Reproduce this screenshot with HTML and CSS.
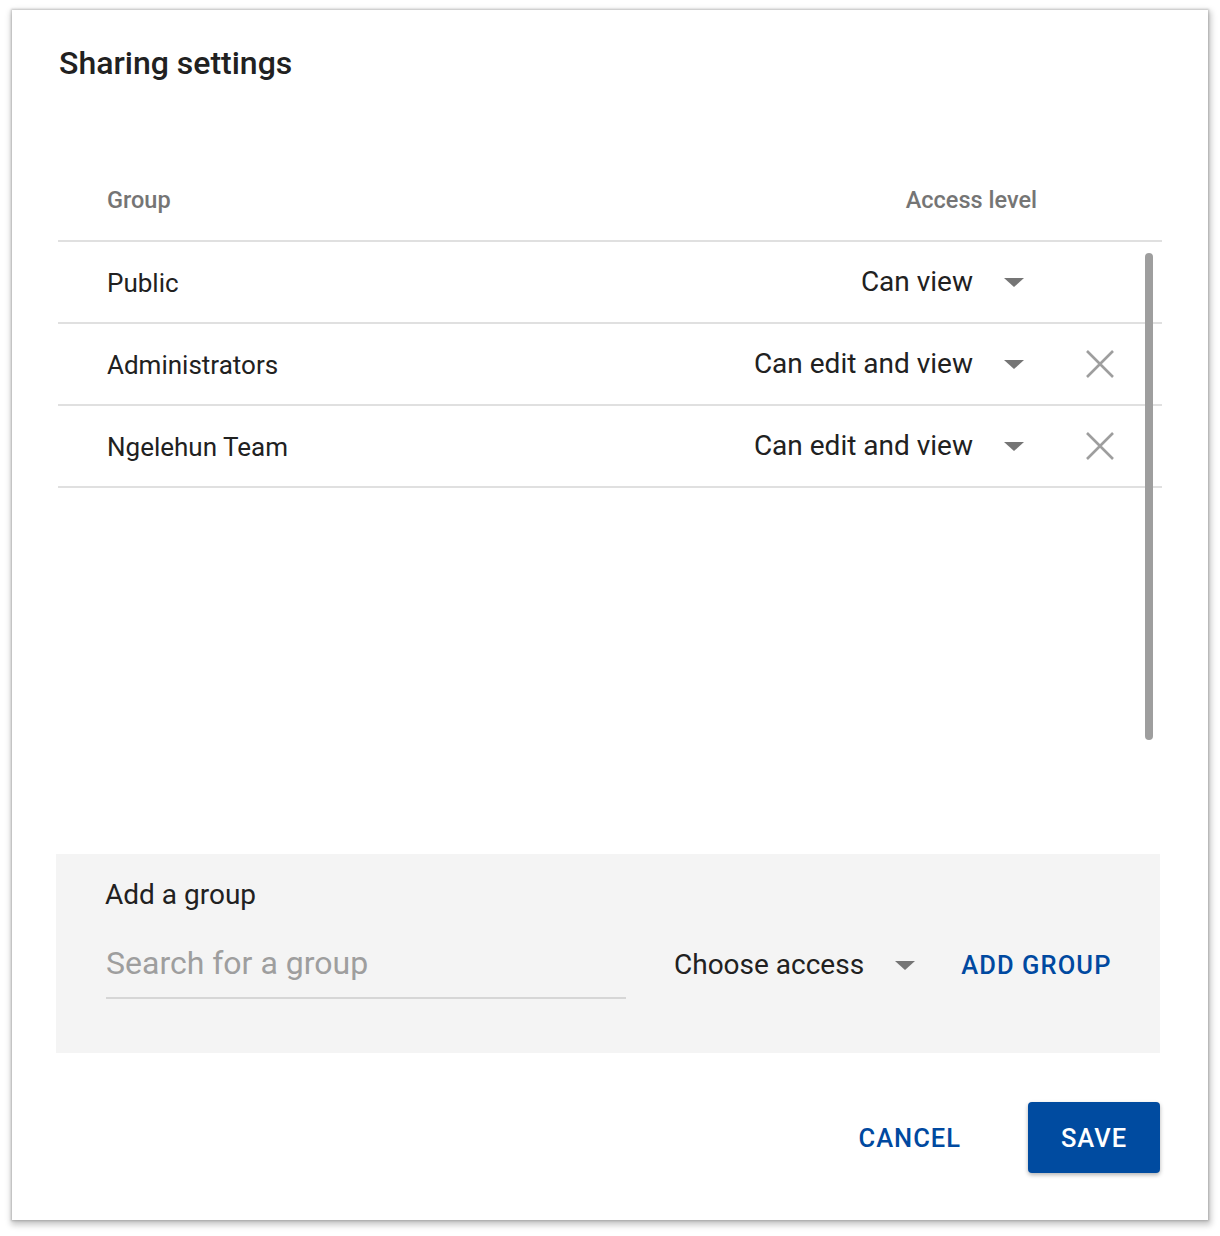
FILE: index.html
```html
<!DOCTYPE html>
<html>
<head>
<meta charset="utf-8">
<link rel="stylesheet" href="styles.css">
</head>
<body>
<div class="dialog">
  <h1 class="title">Sharing settings</h1>
  <div class="table-head">
    <span class="col-group">Group</span>
    <span class="col-access">Access level</span>
  </div>
  <div class="rows">
    <div class="row">
      <span class="name">Public</span>
      <span class="select"><span class="sel-text">Can view</span><span class="caret"></span></span>
      <span class="remove"></span>
    </div>
    <div class="row">
      <span class="name">Administrators</span>
      <span class="select"><span class="sel-text">Can edit and view</span><span class="caret"></span></span>
      <span class="remove"><svg class="x" viewBox="0 0 28 28"><path d="M1 1L27 27M27 1L1 27" stroke="#9e9e9e" stroke-width="2.6" fill="none"/></svg></span>
    </div>
    <div class="row">
      <span class="name">Ngelehun Team</span>
      <span class="select"><span class="sel-text">Can edit and view</span><span class="caret"></span></span>
      <span class="remove"><svg class="x" viewBox="0 0 28 28"><path d="M1 1L27 27M27 1L1 27" stroke="#9e9e9e" stroke-width="2.6" fill="none"/></svg></span>
    </div>
    <div class="scrollbar"></div>
  </div>
  <div class="add-panel">
    <div class="add-label">Add a group</div>
    <div class="add-controls">
      <div class="search">Search for a group</div>
      <div class="choose"><span class="sel-text">Choose access</span><span class="caret"></span></div>
      <div class="add-btn">ADD GROUP</div>
    </div>
  </div>
  <div class="footer">
    <div class="btn-flat">CANCEL</div>
    <div class="btn-raised">SAVE</div>
  </div>
</div>
</body>
</html>
```

FILE: styles.css
```css
* { box-sizing: border-box; }
html, body { margin: 0; padding: 0; background: #ffffff; }
body {
  font-family: Roboto, "Noto Sans", "Liberation Sans", sans-serif;
  color: #212121;
  width: 1220px;
  height: 1236px;
  overflow: hidden;
}
.dialog {
  margin: 10px 0 0 12px;
  width: 1196px;
  height: 1210px;
  background: #fff;
  box-shadow: 0 0 2px 1px rgba(0,0,0,0.18), 1px 3px 6px 2px rgba(0,0,0,0.22);
  padding: 0 46px;
  display: flex;
  flex-direction: column;
}
.title {
  margin: 0;
  padding: 35px 0 0 1px;
  height: 150px;
  font-size: 32px;
  line-height: 36px;
  font-weight: 500;
  color: #212121;
}
.table-head {
  height: 82px;
  display: flex;
  align-items: center;
  border-bottom: 2px solid #e0e0e0;
  padding: 0 125px 0 49px;
  font-size: 23.5px;
  font-weight: 500;
  color: #757575;
}
.col-group { flex: 1; }
.rows {
  position: relative;
  height: 612px;
}
.row {
  height: 82px;
  display: flex;
  align-items: center;
  border-bottom: 2px solid #e0e0e0;
  padding-left: 49px;
  padding-top: 2px;
  font-size: 26px;
  color: #212121;
}
.name { flex: 1; }
.select {
  display: flex;
  align-items: center;
  gap: 31px;
  font-size: 28px;
  margin-top: -3px;
}
.caret {
  width: 0; height: 0;
  border-left: 10px solid transparent;
  border-right: 10px solid transparent;
  border-top: 9px solid #757575;
  margin-top: 1px;
}
.remove {
  width: 138px;
  display: flex;
  justify-content: flex-start;
  padding-left: 62px;
  margin-top: -3px;
}
.x { width: 28px; height: 28px; display: block; }
.scrollbar {
  position: absolute;
  left: 1087px;
  top: 11px;
  width: 8px;
  height: 487px;
  border-radius: 4px;
  background: #9e9e9e;
}
.add-panel {
  margin: 0 2px 0 -2px;
  height: 199px;
  background: #f4f4f4;
  padding: 23px 0 0 49px;
}
.add-label {
  font-size: 28px;
  line-height: 36px;
  color: #212121;
}
.add-controls {
  display: flex;
  align-items: flex-start;
  margin-top: 30px;
}
.search {
  width: 520px;
  margin-left: 1px;
  font-size: 32px;
  line-height: 40px;
  color: #9e9e9e;
  padding-bottom: 14px;
  border-bottom: 2px solid #d6d6d6;
}
.choose {
  margin-left: 48px;
  display: flex;
  align-items: center;
  gap: 31px;
  font-size: 28px;
  line-height: 40px;
  margin-top: 2px;
  color: #212121;
}
.add-btn {
  margin-left: 46px;
  font-size: 25.5px;
  line-height: 40px;
  margin-top: 2px;
  font-weight: 500;
  letter-spacing: 1.1px;
  color: #0049a0;
}
.footer {
  flex: 1;
  display: flex;
  justify-content: flex-end;
  align-items: flex-start;
  padding-top: 49px;
  padding-right: 2px;
}
.btn-flat {
  height: 71px;
  display: flex;
  align-items: center;
  font-size: 25.5px;
  font-weight: 500;
  letter-spacing: 1px;
  color: #0049a0;
  margin-right: 67px;
}
.btn-raised {
  width: 132px;
  height: 71px;
  display: flex;
  align-items: center;
  justify-content: center;
  border-radius: 4px;
  background: #004ba0;
  color: #fff;
  font-size: 25.5px;
  font-weight: 500;
  letter-spacing: 1px;
  box-shadow: 0 2px 4px rgba(0,0,0,0.3);
}
```
